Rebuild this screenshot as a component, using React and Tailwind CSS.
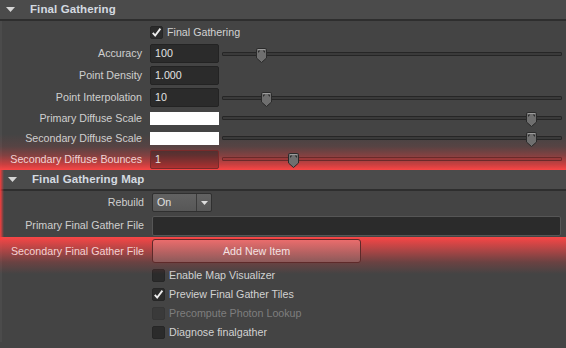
import React from "react";

const sliders = {
  accuracy: 33,
  interpolation: 38,
  primaryScale: 303,
  secondaryScale: 303,
  bounces: 65,
};

function Header({ title, inset }) {
  return (
    <div className="h-[21px] bg-[#4b4b4b] border-b-2 border-[#2e2e2e] flex items-center">
      <div className={inset ? "pl-[8px] w-[32px]" : "pl-[6px] w-[30px]"}>
        <svg width="9" height="5" viewBox="0 0 9 5">
          <polygon points="0,0 9,0 4.5,5" fill="#d6d6d6" />
        </svg>
      </div>
      <span className="font-bold text-[11.5px] text-[#d4dae0] tracking-[0.1px]">
        {title}
      </span>
    </div>
  );
}

function Thumb({ left }) {
  return (
    <div className="absolute -top-[5px]" style={{ left }}>
      <svg width="11" height="15" viewBox="0 0 11 15">
        <path
          d="M1.5 0.5h8a1 1 0 0 1 1 1v8.5l-5 4.5-5-4.5v-8.5a1 1 0 0 1 1-1z"
          fill="#6f6f6f"
          stroke="#2a2a2a"
        />
        <path d="M2 1.5h7" stroke="#9c9c9c" />
        <path d="M2.5 4.5v-1.5h1.5M7 3h1.5v1.5" stroke="#2e2e2e" fill="none" />
      </svg>
    </div>
  );
}

function Slider({ value, red }) {
  return (
    <div
      className={`relative ml-[3px] w-[340px] h-[4px] rounded-[1px] border ${
        red ? "border-[#6a2a2a] bg-[#9a3a3a]" : "border-[#262626] bg-[#3a3a3a]"
      }`}
    >
      <Thumb left={value} />
    </div>
  );
}

function Row({ label, h, labelW, labelColor, children }) {
  return (
    <div className={`relative z-10 flex items-center ${h}`}>
      <div className={`${labelW} text-right pr-[8px] whitespace-nowrap ${labelColor}`}>
        {label}
      </div>
      {children}
    </div>
  );
}

function NumField({ value, red }) {
  return (
    <div
      className={`w-[69px] h-[19px] rounded-[2px] border flex items-center pl-[4px] text-[#e2e2e2] ${
        red ? "bg-black/25 border-[#7a2a2a]" : "bg-[#2b2b2b] border-[#232323]"
      }`}
    >
      {value}
    </div>
  );
}

function Swatch() {
  return <div className="w-[69px] h-[13px] bg-white" />;
}

function Check({ checked, disabled }) {
  return (
    <div
      className={`w-[13px] h-[13px] rounded-[2px] border flex items-center justify-center ${
        disabled ? "bg-[#3a3a3a] border-[#363636]" : "bg-[#2b2b2b] border-[#262626]"
      }`}
    >
      {checked && (
        <svg width="11" height="11" viewBox="0 0 11 11">
          <path
            d="M1.8 5.8 L4.2 8.6 L9.4 1.6"
            stroke="#ececec"
            strokeWidth="1.9"
            fill="none"
          />
        </svg>
      )}
    </div>
  );
}

function CheckRow({ label, checked, disabled, h }) {
  return (
    <div className={`flex items-center ${h}`}>
      <div className="w-[148px]" />
      <Check checked={checked} disabled={disabled} />
      <span className={`ml-[4px] ${disabled ? "text-[#7e7e7e]" : "text-[#d2d2d2]"}`}>
        {label}
      </span>
    </div>
  );
}

export default function App() {
  return (
    <div className="w-[566px] h-[348px] overflow-hidden bg-[#444444] font-['Liberation_Sans',Arial,sans-serif] text-[10.7px] text-[#cccccc]">
      <Header title="Final Gathering" />
      <div className="border-l-2 border-[#4b4b4b]">
        <div className="flex items-center h-[22px]">
          <div className="w-[148px]" />
          <Check checked />
          <span className="ml-[4px] text-[#d2d2d2]">Final Gathering</span>
        </div>
        <Row label="Accuracy" h="h-[21px]" labelW="w-[148px]" labelColor="text-[#cfcfcf]">
          <NumField value="100" />
          <Slider value={sliders.accuracy} />
        </Row>
        <Row label="Point Density" h="h-[23px]" labelW="w-[148px]" labelColor="text-[#cfcfcf]">
          <NumField value="1.000" />
        </Row>
        <Row label="Point Interpolation" h="h-[21px]" labelW="w-[148px]" labelColor="text-[#cfcfcf]">
          <NumField value="10" />
          <Slider value={sliders.interpolation} />
        </Row>
        <Row label="Primary Diffuse Scale" h="h-[20px]" labelW="w-[148px]" labelColor="text-[#cfcfcf]">
          <Swatch />
          <Slider value={sliders.primaryScale} />
        </Row>
        <Row label="Secondary Diffuse Scale" h="h-[20px]" labelW="w-[148px]" labelColor="text-[#cfcfcf]">
          <Swatch />
          <Slider value={sliders.secondaryScale} />
        </Row>
        <div className="relative h-[22px]">
          <div className="absolute -left-[2px] right-0 -top-[14px] bottom-0 z-0 bg-[linear-gradient(to_bottom,rgba(255,60,60,0)_0%,rgba(255,60,60,0.1)_35%,rgba(255,60,60,0.34)_60%,rgba(255,62,62,0.72)_85%,rgba(255,70,70,0.97)_100%)]" />
          <Row label="Secondary Diffuse Bounces" h="h-[22px]" labelW="w-[148px]" labelColor="text-[#f0d4d4]">
            <NumField value="1" red />
            <Slider value={sliders.bounces} red />
          </Row>
        </div>
      </div>

      <div className="relative">
        <div className="absolute left-0 top-0 h-[70px] w-[4px] z-20 bg-[linear-gradient(to_right,rgba(255,60,60,0.95),rgba(255,60,60,0))]" />
        <Header title="Final Gathering Map" inset />
        <div className="border-l-2 border-[#4b4b4b] pl-[2px]">
          <Row label="Rebuild" h="h-[23px]" labelW="w-[148px]" labelColor="text-[#cfcfcf]">
            <div className="w-[60px] h-[19px] rounded-[2px] border border-[#303030] bg-[linear-gradient(to_bottom,#626262,#575757)] flex items-center">
              <span className="pl-[4px] flex-1 text-[#e0e0e0]">On</span>
              <div className="w-[15px] h-full border-l border-[#3a3a3a] flex items-center justify-center">
                <svg width="7" height="4" viewBox="0 0 7 4">
                  <polygon points="0,0 7,0 3.5,4" fill="#dedede" />
                </svg>
              </div>
            </div>
          </Row>
          <Row label="Primary Final Gather File" h="h-[23px]" labelW="w-[148px]" labelColor="text-[#cfcfcf]">
            <div className="w-[409px] h-[20px] rounded-[2px] border border-[#565656] bg-[#2b2b2b]" />
          </Row>
          <div className="relative h-[28px]">
            <div className="absolute -left-[4px] right-0 top-0 h-[37px] z-0 bg-[linear-gradient(to_bottom,rgba(255,70,70,0.97)_0%,rgba(240,70,70,0.62)_35%,rgba(220,60,60,0.25)_68%,rgba(200,60,60,0)_100%)]" />
            <Row label="Secondary Final Gather File" h="h-[28px]" labelW="w-[148px]" labelColor="text-[#f4d2d2]">
              <div className="w-[209px] h-[24px] rounded-[3px] border border-[#5e2a2a] bg-[linear-gradient(to_bottom,#ea6c6c,#8c5a5a)] flex items-center justify-center text-[#f3e2e2]">
                Add New Item
              </div>
            </Row>
          </div>
          <CheckRow label="Enable Map Visualizer" h="h-[20px]" />
          <CheckRow label="Preview Final Gather Tiles" checked h="h-[19px]" />
          <CheckRow label="Precompute Photon Lookup" disabled h="h-[19px]" />
          <CheckRow label="Diagnose finalgather" h="h-[19px]" />
        </div>
      </div>
    </div>
  );
}
